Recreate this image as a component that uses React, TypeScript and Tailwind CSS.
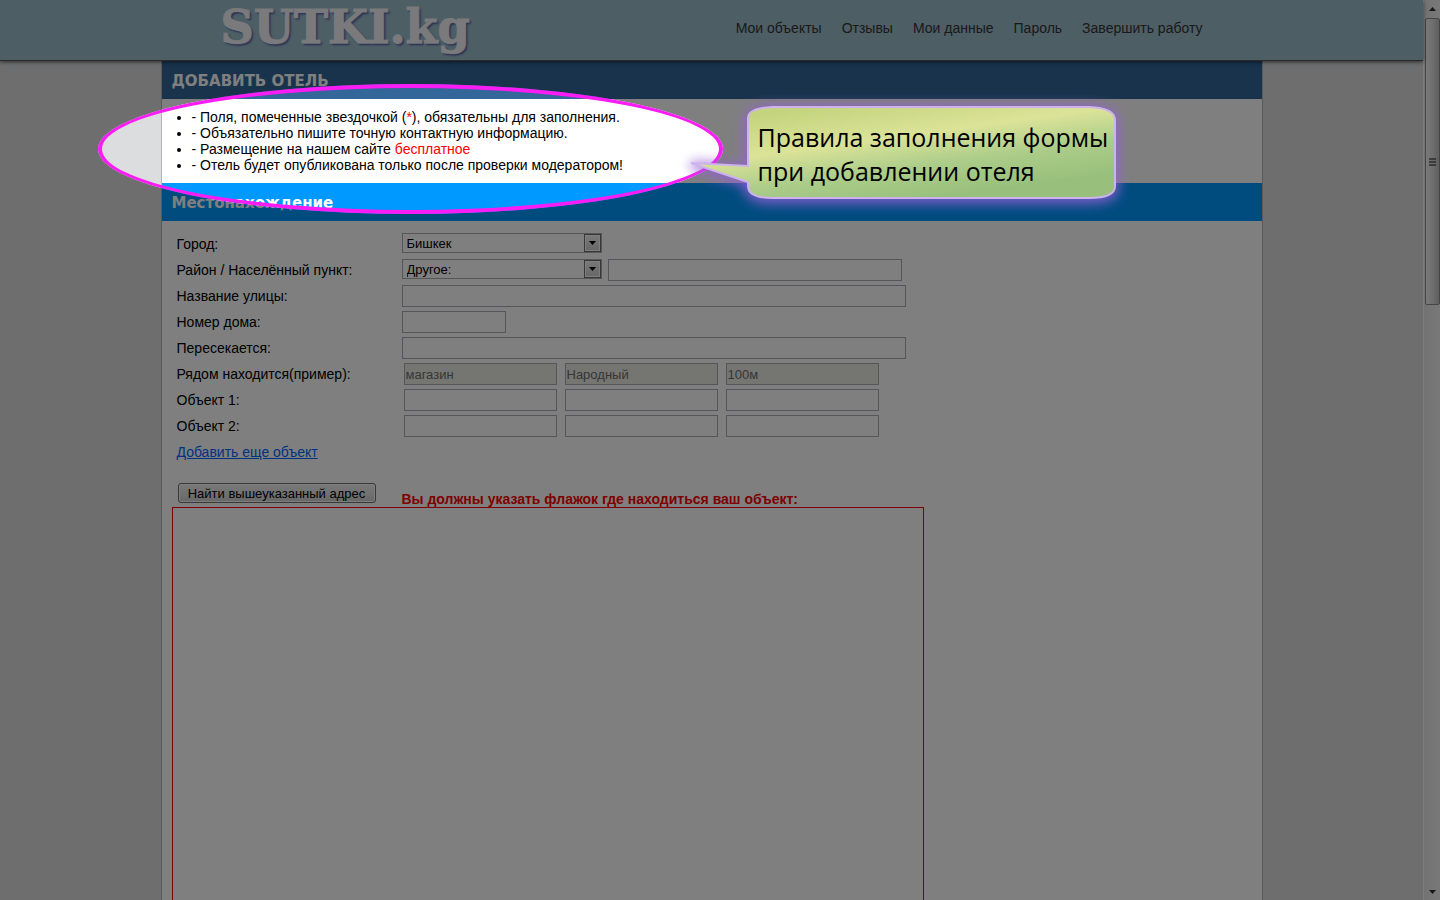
import React from "react";

const navLinks = ["Мои объекты", "Отзывы", "Мои данные", "Пароль", "Завершить работу"];

const field =
  "h-[22px] rounded-none border border-[#abadb3] bg-white px-px text-[13px] leading-4 text-black outline-none";

function SectionTitle({ children, className }: { children: React.ReactNode; className: string }) {
  return (
    <h2
      className={`flex h-[38px] shrink-0 items-center px-2.5 pt-[3px] font-['DejaVu_Sans',sans-serif] text-[15px] font-bold text-white ${className}`}
    >
      {children}
    </h2>
  );
}

function Row({ id, label, children }: { id: string; label: string; children: React.ReactNode }) {
  return (
    <div className="flex h-[26px] items-start">
      <label htmlFor={id} className="w-[225px] shrink-0 pt-[5px] leading-4">
        {label}
      </label>
      <div className="flex items-start pt-0.5">{children}</div>
    </div>
  );
}

function Select({ id, options }: { id: string; options: string[] }) {
  return (
    <div className="relative h-5 w-[200px]">
      <select
        id={id}
        className="block h-5 w-full appearance-none rounded-none border border-[#abadb3] bg-white pl-1 pr-5 pt-px text-[13px] leading-4 text-black outline-none"
      >
        {options.map((o) => (
          <option key={o}>{o}</option>
        ))}
      </select>
      <span className="pointer-events-none absolute right-px top-px flex h-[18px] w-[17px] items-center justify-center border border-[#707070] bg-linear-to-b from-[#f2f2f2] to-[#cfcfcf] shadow-[inset_0_0_0_1px_#fcfcfc]">
        <svg width="7" height="4" viewBox="0 0 7 4" aria-hidden="true">
          <path d="M0 0h7L3.5 4z" fill="#000" />
        </svg>
      </span>
    </div>
  );
}

function ObjectFields({ id, label, values }: { id: string; label: string; values?: string[] }) {
  return (
    <Row id={id} label={label}>
      <div className="flex gap-2 pl-0.5">
        {[0, 1, 2].map((i) => (
          <input
            key={i}
            id={i === 0 ? id : undefined}
            aria-label={i === 0 ? undefined : label}
            type="text"
            disabled={!!values}
            defaultValue={values ? values[i] : ""}
            className={`${field} w-[153px] disabled:bg-[#ebebe4] disabled:text-[#6d6d6d]`}
          />
        ))}
      </div>
    </Row>
  );
}

function Scrollbar() {
  return (
    <div
      aria-hidden="true"
      className="flex w-[17px] shrink-0 flex-col items-center border-l border-[#fafafa] bg-linear-to-r from-[#e6e6e6] to-[#f2f2f2]"
    >
      <div className="flex h-[18px] items-center">
        <svg width="7" height="4" viewBox="0 0 7 4">
          <path d="M0 4h7L3.5 0z" fill="#303030" />
        </svg>
      </div>
      <div className="flex h-[287px] w-[15px] items-center justify-center rounded-xs border border-[#8b8b8b] bg-linear-to-r from-[#f4f4f4] via-[#dedede] to-[#bcbcbc]">
        <svg width="7" height="8" viewBox="0 0 7 8">
          <path d="M0 1h7M0 4h7M0 7h7" stroke="#555" strokeWidth="1.5" />
        </svg>
      </div>
      <div className="mt-auto flex h-[17px] items-center">
        <svg width="7" height="4" viewBox="0 0 7 4">
          <path d="M0 0h7L3.5 4z" fill="#303030" />
        </svg>
      </div>
    </div>
  );
}

function Tour() {
  return (
    <div className="pointer-events-none absolute inset-0 z-20 flex justify-center overflow-hidden pr-[17px]">
      <div className="relative w-[1102px] shrink-0">
        <div className="absolute -left-[63px] top-[84px] h-[130px] w-[625px] rounded-[50%] border-4 border-[#fa1cf5] shadow-[0_0_0_3000px_rgba(0,0,0,0.5)]" />
        <div className="absolute left-[510px] top-[88px] h-[130px] w-[470px]">
          <svg
            className="absolute inset-0 overflow-visible"
            width="470"
            height="130"
            viewBox="0 0 470 130"
            aria-hidden="true"
          >
            <defs>
              <linearGradient id="bubble" gradientUnits="userSpaceOnUse" x1="200" y1="12" x2="214" y2="116">
                <stop offset="0" stopColor="#c4d47e" />
                <stop offset="0.38" stopColor="#dbe398" />
                <stop offset="0.68" stopColor="#adcd8a" />
                <stop offset="1" stopColor="#98c07c" />
              </linearGradient>
              <filter id="glow" x="-10%" y="-30%" width="120%" height="160%">
                <feGaussianBlur stdDeviation="6" />
              </filter>
            </defs>
            <path
              d="M102 19H418Q444 20 444 32V98Q444 110 418 110H102Q77 110 77 98V94L20 75L77 78V30Q77 20 102 19Z"
              transform="translate(0 2)"
              fill="#9560d8"
              stroke="#9560d8"
              strokeWidth="8"
              opacity="0.8"
              filter="url(#glow)"
            />
            <path
              d="M102 19H418Q444 20 444 32V98Q444 110 418 110H102Q77 110 77 98V94L20 75L77 78V30Q77 20 102 19Z"
              fill="url(#bubble)"
              stroke="#cdb2ee"
              strokeWidth="2"
            />
          </svg>
          <p className="absolute left-[87px] top-8 whitespace-nowrap font-['Open_Sans',sans-serif] text-[25px] leading-[34px] text-black">
            Правила заполнения формы
            <br />
            при добавлении отеля
          </p>
        </div>
      </div>
    </div>
  );
}

export default function App() {
  return (
    <div className="relative flex h-screen overflow-hidden bg-[#dcdddf] font-['Liberation_Sans',Arial,sans-serif] text-sm text-black">
      <div className="flex min-w-0 flex-1 flex-col">
        <header className="z-10 h-[61px] shrink-0 border-b border-[#555] bg-[#9bbccb] shadow-[0_1px_4px_rgba(0,0,0,0.6)]">
          <div className="mx-auto flex w-full max-w-[1102px] items-start justify-between px-[60px]">
            <a
              href="#"
              className="block font-['DejaVu_Serif',serif] text-[46px] font-bold leading-[54px] text-[#f4f4f8] [-webkit-text-stroke:1px_#f4f4f8] [text-shadow:1px_1px_0_#9a9cb4,2px_2px_2px_#4654a8]"
            >
              SUTKI.kg
            </a>
            <nav className="flex gap-5 pt-5 leading-4 text-[#333]">
              {navLinks.map((l) => (
                <a key={l} href="#" className="whitespace-nowrap">
                  {l}
                </a>
              ))}
            </nav>
          </div>
        </header>

        <main className="mx-auto flex min-h-0 w-full max-w-[1102px] flex-1 flex-col border-x border-[#b4b4b8] bg-white">
          <SectionTitle className="bg-[#336699]">ДОБАВИТЬ ОТЕЛЬ</SectionTitle>
          <ul className="shrink-0 list-disc py-2.5 pl-[30px] leading-4">
            <li>
              - Поля, помеченные звездочкой (<span className="text-[#f00]">*</span>), обязательны для заполнения.
            </li>
            <li>- Объязательно пишите точную контактную информацию.</li>
            <li>
              - Размещение на нашем сайте <span className="text-[#f00]">бесплатное</span>
            </li>
            <li>- Отель будет опубликована только после проверки модератором!</li>
          </ul>
          <SectionTitle className="bg-[#0099ff]">Местонахождение</SectionTitle>

          <form className="flex min-h-0 flex-1 flex-col px-2.5 pt-2.5">
            <div className="shrink-0 pl-[5px]">
              <Row id="city" label="Город:">
                <Select id="city" options={["Бишкек"]} />
              </Row>
              <Row id="district" label="Район / Населённый пункт:">
                <div className="flex gap-1.5">
                  <Select id="district" options={["Другое:"]} />
                  <input aria-label="Другой район" type="text" className={`${field} w-[294px]`} />
                </div>
              </Row>
              <Row id="street" label="Название улицы:">
                <input id="street" type="text" className={`${field} w-[504px]`} />
              </Row>
              <Row id="house" label="Номер дома:">
                <input id="house" type="text" className={`${field} w-[104px]`} />
              </Row>
              <Row id="cross" label="Пересекается:">
                <input id="cross" type="text" className={`${field} w-[504px]`} />
              </Row>
              <ObjectFields id="near" label="Рядом находится(пример):" values={["магазин", "Народный", "100м"]} />
              <ObjectFields id="object1" label="Объект 1:" />
              <ObjectFields id="object2" label="Объект 2:" />
              <div className="h-[26px] pt-[5px] leading-4">
                <a href="#" className="text-[#0066ff] underline">
                  Добавить еще объект
                </a>
              </div>
              <div className="flex h-[42px] items-end">
                <div className="w-[225px] shrink-0 pb-1 pl-px">
                  <button
                    type="button"
                    className="block h-5 w-[198px] rounded-[3px] border border-[#707070] bg-linear-to-b from-[#f2f2f2] via-[#e4e4e4] to-[#cfcfcf] pt-px text-[13px] leading-4 shadow-[inset_0_0_0_1px_#fcfcfc]"
                  >
                    Найти вышеуказанный адрес
                  </button>
                </div>
                <strong className="leading-4 text-[#f00]">Вы должны указать флажок где находиться ваш объект:</strong>
              </div>
            </div>
            <div className="w-full max-w-[752px] flex-1 border border-b-0 border-[#f00]" />
          </form>
        </main>
      </div>
      <Scrollbar />
      <Tour />
    </div>
  );
}
